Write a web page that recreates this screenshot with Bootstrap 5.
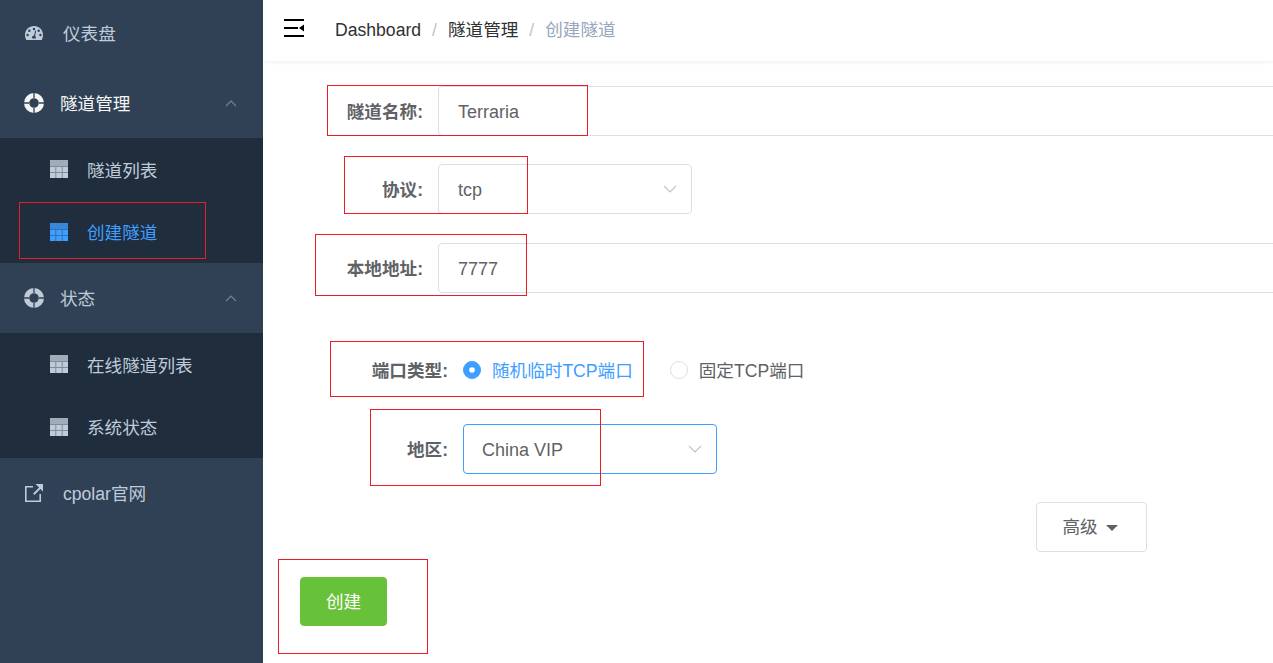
<!DOCTYPE html>
<html lang="zh-CN">
<head>
    <meta charset="UTF-8">
    <meta name="viewport" content="width=device-width, initial-scale=1.0">
    <title>创建隧道</title>
    <link href="https://cdn.jsdelivr.net/npm/bootstrap@5.3.2/dist/css/bootstrap.min.css" rel="stylesheet">
    <style>
        html, body {
            height: 100%;
        }
        body {
            font-family: "Liberation Sans", "Noto Sans CJK SC", sans-serif;
            font-size: 17.6px;
            color: #606266;
            overflow: hidden;
            position: relative;
        }
        .app-wrap {
            height: 663px;
        }
        .side-bar {
            width: 263px;
            background-color: #304156;
            color: #bfcbd9;
            flex: none;
        }
        .side-item {
            height: 70px;
            color: #bfcbd9;
            text-decoration: none;
        }
        .side-item.first-item {
            height: 66px;
            margin-bottom: 2px;
        }
        .side-item.open-item {
            color: #f4f4f5;
        }
        .side-item span {
            padding-top: 2px;
        }
        .side-sub {
            background-color: #1f2d3d;
            height: 125px;
        }
        .sub-item {
            height: 62.5px;
            padding-left: 50px;
            color: #bfcbd9;
            text-decoration: none;
        }
        .sub-item span {
            padding-top: 3px;
        }
        .sub-item.active-item {
            color: #409eff;
        }
        .ico-plain { margin-left: 25px; margin-right: 20px; width: 18px; flex: none; }
        .ico-ring { margin-left: 24px; margin-right: 16px; width: 20px; flex: none; }
        .ico-table { margin-right: 19px; width: 18px; flex: none; }
        .ico-up { position: absolute; left: 225px; }
        .main-area {
            min-width: 0;
        }
        .top-bar {
            height: 61px;
            padding-left: 21px;
            box-shadow: 0 1px 4px rgba(0, 21, 41, .08);
        }
        .fold-ico {
            margin-bottom: 5px;
            flex: none;
        }
        .top-bar .breadcrumb {
            margin: 0 0 0 31px;
            font-size: 17.6px;
            --bs-breadcrumb-divider-color: #c0c4cc;
            --bs-breadcrumb-item-padding-x: 11px;
        }
        .top-bar .breadcrumb-item {
            color: #303133;
        }
        .top-bar .breadcrumb-item.active {
            color: #97a8be;
        }
        .form-area {
            padding-top: 25px;
            padding-left: 15px;
        }
        .form-line {
            height: 50px;
            margin-bottom: 29px;
        }
        .form-line.tight-line {
            margin-bottom: 28px;
        }
        .form-line.radio-line {
            margin-top: 52px;
        }
        .line-label {
            width: 145px;
            margin-right: 15px;
            padding-top: 2px;
            text-align: right;
            font-weight: 700;
            flex: none;
        }
        .wide-label {
            width: 170px;
        }
        .form-area .form-control,
        .form-area .form-select {
            height: 50px;
            font-size: 18px;
            color: #606266;
            border-color: #dcdfe6;
            border-radius: 4px;
            padding: 2px 19px 0;
            box-shadow: none;
        }
        .long-input {
            width: 900px;
            flex: none;
        }
        .form-area .form-select {
            width: 254px;
            flex: none;
            background-size: 14px 8px;
            background-position: right 14px center;
            background-image: url("data:image/svg+xml,%3Csvg xmlns='http://www.w3.org/2000/svg' viewBox='0 0 14 8'%3E%3Cpath d='M1 1l6 6 6-6' fill='none' stroke='%23c0c4cc' stroke-width='1.2'/%3E%3C/svg%3E");
        }
        .form-area .form-select.focus-select {
            border-color: #409eff;
            padding-left: 18px;
        }
        .radio-opt {
            margin: 0 37px 0 0;
            padding: 0;
            gap: 11px;
        }
        .radio-opt .form-check-input {
            float: none;
            margin: 0;
            width: 18px;
            height: 18px;
            border-color: #dcdfe6;
        }
        .radio-opt .form-check-label {
            padding-top: 2px;
        }
        .radio-opt .form-check-input:checked {
            background-color: #409eff;
            border-color: #409eff;
            background-image: url("data:image/svg+xml,%3Csvg xmlns='http://www.w3.org/2000/svg' viewBox='-4 -4 8 8'%3E%3Ccircle r='1.4' fill='%23fff'/%3E%3C/svg%3E");
        }
        .radio-opt .form-check-input:checked + .form-check-label {
            color: #409eff;
        }
        .more-line {
            padding-right: 126px;
            margin-bottom: 25px;
        }
        .more-btn {
            width: 111px;
            height: 50px;
            font-size: 17.6px;
            color: #606266;
            background: #fff;
            border: 1px solid #dcdfe6;
            border-radius: 4px;
            padding: 0 3px 0 0;
        }
        .more-btn::after {
            margin-left: 8px;
            vertical-align: 2px;
            border-top-width: 6px;
            border-left-width: 6px;
            border-right-width: 6px;
        }
        .create-btn {
            width: 87px;
            height: 49px;
            margin-left: 22px;
            font-size: 17.6px;
            color: #fff;
            background-color: #67c23a;
            border-color: #67c23a;
            border-radius: 4px;
            padding: 2px 0 0;
        }
        /* red annotation frames drawn over the screenshot */
        .mark-box {
            position: absolute;
            border: 1px solid #ed1c24;
            pointer-events: none;
        }
        .box-a { left: 19px; top: 202px; width: 187px; height: 57px; }
        .box-b { left: 327px; top: 85px; width: 261px; height: 51px; }
        .box-c { left: 344px; top: 156px; width: 184px; height: 58px; }
        .box-d { left: 315px; top: 234px; width: 212px; height: 62px; }
        .box-e { left: 330px; top: 341px; width: 314px; height: 56px; }
        .box-f { left: 370px; top: 409px; width: 231px; height: 77px; }
        .box-g { left: 278px; top: 559px; width: 150px; height: 95px; }
    </style>
</head>
<body>
    <svg width="0" height="0" class="position-absolute">
        <symbol id="i-table" viewBox="0 0 18 18">
            <path fill="currentColor" opacity=".6" d="M0 0h18v18H0z"/>
            <path fill="currentColor" opacity=".5" d="M0 0h18v6H0z"/>
            <path fill="currentColor" d="M0 7h5.300v5H0zM6.300 7h5.400v5H6.300zM12.700 7H18v5h-5.300zM0 13h5.300v5H0zM6.300 13h5.400v5H6.300zM12.700 13H18v5h-5.300z"/>
        </symbol>
        <symbol id="i-ring" viewBox="0 0 20 20">
            <path fill="currentColor" fill-rule="evenodd" d="M10 0a10 10 0 1 0 0 20a10 10 0 0 0 0-20zM10 5.200a4.800 4.800 0 1 1 0 9.600a4.800 4.800 0 0 1 0-9.600z"/>
            <path stroke="#304156" stroke-width="1.3" d="M10 0v5M10 15v5M0 10h5M15 10h5"/>
        </symbol>
        <symbol id="i-up" viewBox="0 0 12 7">
            <path d="M1 6l5-5 5 5" fill="none" stroke="#79838f" stroke-width="1.1"/>
        </symbol>
    </svg>

    <div class="app-wrap d-flex">
        <nav class="side-bar d-flex flex-column">
            <a href="#" class="side-item first-item d-flex align-items-center">
                <svg class="ico-plain" height="14" viewBox="0 0 18 14">
                    <path fill="currentColor" fill-rule="evenodd" d="M9 0C4 0 0 3.800 0 9c0 1.800.5 3.500 1.300 5h15.400c.8-1.500 1.300-3.200 1.300-5 0-5.200-4-9-9-9zM9 1.800a1.200 1.200 0 1 1 0 2.400a1.200 1.200 0 0 1 0-2.400zM4.300 3.600a1.200 1.200 0 1 1 0 2.400a1.200 1.200 0 0 1 0-2.400zM13.700 3.600a1.200 1.200 0 1 1 0 2.400a1.200 1.200 0 0 1 0-2.400zM2.600 7.800a1.200 1.200 0 1 1 0 2.400a1.200 1.200 0 0 1 0-2.400zM15.400 7.800a1.200 1.200 0 1 1 0 2.400a1.200 1.200 0 0 1 0-2.400zM10.200 4.500l.9.300-1 5.300c.5.400.8.900.8 1.500 0 .3-.1.600-.2.900H7.300c-.1-.3-.2-.6-.2-.9 0-1.100.9-2 2-2z"/>
                </svg>
                <span>仪表盘</span>
            </a>
            <a href="#" class="side-item open-item d-flex align-items-center position-relative">
                <svg class="ico-ring" height="20"><use href="#i-ring"/></svg>
                <span>隧道管理</span>
                <svg class="ico-up" width="12" height="7"><use href="#i-up"/></svg>
            </a>
            <div class="side-sub">
                <a href="#" class="sub-item d-flex align-items-center">
                    <svg class="ico-table" height="18"><use href="#i-table"/></svg>
                    <span>隧道列表</span>
                </a>
                <a href="#" class="sub-item active-item d-flex align-items-center">
                    <svg class="ico-table" height="18"><use href="#i-table"/></svg>
                    <span>创建隧道</span>
                </a>
            </div>
            <a href="#" class="side-item d-flex align-items-center position-relative">
                <svg class="ico-ring" height="20"><use href="#i-ring"/></svg>
                <span>状态</span>
                <svg class="ico-up" width="12" height="7"><use href="#i-up"/></svg>
            </a>
            <div class="side-sub">
                <a href="#" class="sub-item d-flex align-items-center">
                    <svg class="ico-table" height="18"><use href="#i-table"/></svg>
                    <span>在线隧道列表</span>
                </a>
                <a href="#" class="sub-item d-flex align-items-center">
                    <svg class="ico-table" height="18"><use href="#i-table"/></svg>
                    <span>系统状态</span>
                </a>
            </div>
            <a href="#" class="side-item d-flex align-items-center">
                <svg class="ico-plain" height="18" viewBox="0 0 18 18">
                    <path fill="none" stroke="currentColor" stroke-width="1.6" d="M8 2.800H.8v14.400h14.400V10"/>
                    <path fill="currentColor" d="M10.500 0H18v7.500l-2.600-2.600-6 6-1.300-1.300 6-6z"/>
                </svg>
                <span>cpolar官网</span>
            </a>
        </nav>

        <div class="main-area flex-grow-1 overflow-hidden">
            <header class="top-bar d-flex align-items-center">
                <svg class="fold-ico" width="20" height="18" viewBox="0 0 20 18">
                    <path fill="#000" d="M0 0h20v2H0zM0 8h14v2H0zM0 16h20v2H0zM20 5.500v7L15 9z"/>
                </svg>
                <ol class="breadcrumb">
                    <li class="breadcrumb-item">Dashboard</li>
                    <li class="breadcrumb-item">隧道管理</li>
                    <li class="breadcrumb-item active">创建隧道</li>
                </ol>
            </header>

            <form class="form-area">
                <div class="form-line tight-line d-flex align-items-center">
                    <label class="line-label">隧道名称:</label>
                    <input type="text" class="form-control long-input" value="Terraria">
                </div>
                <div class="form-line d-flex align-items-center">
                    <label class="line-label">协议:</label>
                    <select class="form-select"><option>tcp</option></select>
                </div>
                <div class="form-line d-flex align-items-center">
                    <label class="line-label">本地地址:</label>
                    <input type="text" class="form-control long-input" value="7777">
                </div>
                <div class="form-line radio-line d-flex align-items-center">
                    <label class="line-label wide-label">端口类型:</label>
                    <div class="form-check radio-opt d-flex align-items-center">
                        <input class="form-check-input" type="radio" name="portType" id="portRandom" checked>
                        <label class="form-check-label" for="portRandom">随机临时TCP端口</label>
                    </div>
                    <div class="form-check radio-opt d-flex align-items-center">
                        <input class="form-check-input" type="radio" name="portType" id="portFixed">
                        <label class="form-check-label" for="portFixed">固定TCP端口</label>
                    </div>
                </div>
                <div class="form-line tight-line d-flex align-items-center">
                    <label class="line-label wide-label">地区:</label>
                    <select class="form-select focus-select"><option>China VIP</option></select>
                </div>
                <div class="form-line more-line d-flex justify-content-end">
                    <button type="button" class="btn more-btn dropdown-toggle">高级</button>
                </div>
                <button type="button" class="btn create-btn">创建</button>
            </form>
        </div>
    </div>

    <div class="mark-box box-a"></div>
    <div class="mark-box box-b"></div>
    <div class="mark-box box-c"></div>
    <div class="mark-box box-d"></div>
    <div class="mark-box box-e"></div>
    <div class="mark-box box-f"></div>
    <div class="mark-box box-g"></div>

    <script src="https://cdn.jsdelivr.net/npm/bootstrap@5.3.2/dist/js/bootstrap.bundle.min.js"></script>
</body>
</html>
